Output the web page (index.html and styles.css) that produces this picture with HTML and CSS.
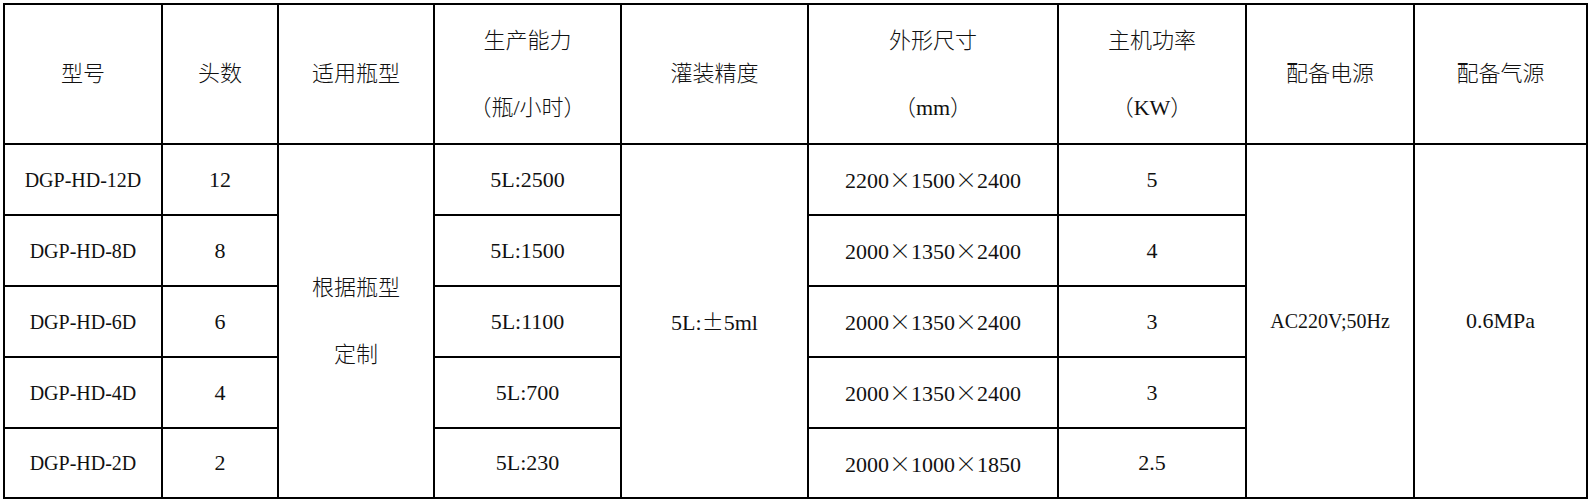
FILE: index.html
```html
<!DOCTYPE html>
<html lang="zh-CN">
<head>
<meta charset="utf-8">
<title>灌装机参数</title>
<link rel="stylesheet" href="styles.css">
</head>
<body>
<table class="spec">
  <colgroup>
    <col class="c1"><col class="c2"><col class="c3"><col class="c4"><col class="c5">
    <col class="c6"><col class="c7"><col class="c8"><col class="c9">
  </colgroup>
  <thead>
    <tr class="head">
      <th>型号</th>
      <th>头数</th>
      <th>适用瓶型</th>
      <th><div class="ln">生产能力</div><div class="ln">（瓶/小时）</div></th>
      <th>灌装精度</th>
      <th><div class="ln">外形尺寸</div><div class="ln">（mm）</div></th>
      <th><div class="ln">主机功率</div><div class="ln">（KW）</div></th>
      <th>配备电源</th>
      <th>配备气源</th>
    </tr>
  </thead>
  <tbody>
    <tr class="row">
      <td class="narrow">DGP-HD-12D</td>
      <td>12</td>
      <td rowspan="5"><div class="ln">根据瓶型</div><div class="ln">定制</div></td>
      <td>5L:2500</td>
      <td rowspan="5">5L:<span class="fw">±</span>5ml</td>
      <td>2200<span class="fw">×</span>1500<span class="fw">×</span>2400</td>
      <td>5</td>
      <td rowspan="5" class="narrow">AC220V;50Hz</td>
      <td rowspan="5">0.6MPa</td>
    </tr>
    <tr class="row">
      <td class="narrow">DGP-HD-8D</td>
      <td>8</td>
      <td>5L:1500</td>
      <td>2000<span class="fw">×</span>1350<span class="fw">×</span>2400</td>
      <td>4</td>
    </tr>
    <tr class="row">
      <td class="narrow">DGP-HD-6D</td>
      <td>6</td>
      <td>5L:1100</td>
      <td>2000<span class="fw">×</span>1350<span class="fw">×</span>2400</td>
      <td>3</td>
    </tr>
    <tr class="row">
      <td class="narrow">DGP-HD-4D</td>
      <td>4</td>
      <td>5L:700</td>
      <td>2000<span class="fw">×</span>1350<span class="fw">×</span>2400</td>
      <td>3</td>
    </tr>
    <tr class="row last">
      <td class="narrow">DGP-HD-2D</td>
      <td>2</td>
      <td>5L:230</td>
      <td>2000<span class="fw">×</span>1000<span class="fw">×</span>1850</td>
      <td>2.5</td>
    </tr>
  </tbody>
</table>
</body>
</html>
```
FILE: styles.css
```css
* {
  box-sizing: border-box;
}

body {
  margin: 0;
  background: #ffffff;
  color: #111111;
  font-family: "Liberation Serif", "Noto Sans CJK SC", serif;
  font-size: 22px;
  font-weight: 300;
}

.spec {
  margin: 3px 0 0 3px;
  border-collapse: separate;
  border-spacing: 0;
  border-left: 2px solid #000;
  border-top: 2px solid #000;
  table-layout: fixed;
  width: 1585px;
}

.c1 { width: 158px; }
.c2 { width: 116px; }
.c3 { width: 156px; }
.c4 { width: 187px; }
.c5 { width: 187px; }
.c6 { width: 250px; }
.c7 { width: 188px; }
.c8 { width: 168px; }
.c9 { width: 173px; }

.spec th,
.spec td {
  border-right: 2px solid #000;
  border-bottom: 2px solid #000;
  padding: 0;
  text-align: center;
  vertical-align: middle;
  font-weight: 300;
  line-height: 30px;
  white-space: nowrap;
}

.spec td.narrow {
  font-size: 20px;
}

.head {
  height: 140px;
}

.row {
  height: 71px;
}

.row.last {
  height: 70px;
}

.ln {
  line-height: 67px;
}

.fw {
  font-family: "Noto Sans CJK SC", sans-serif;
  font-variant-east-asian: full-width;
}
```
